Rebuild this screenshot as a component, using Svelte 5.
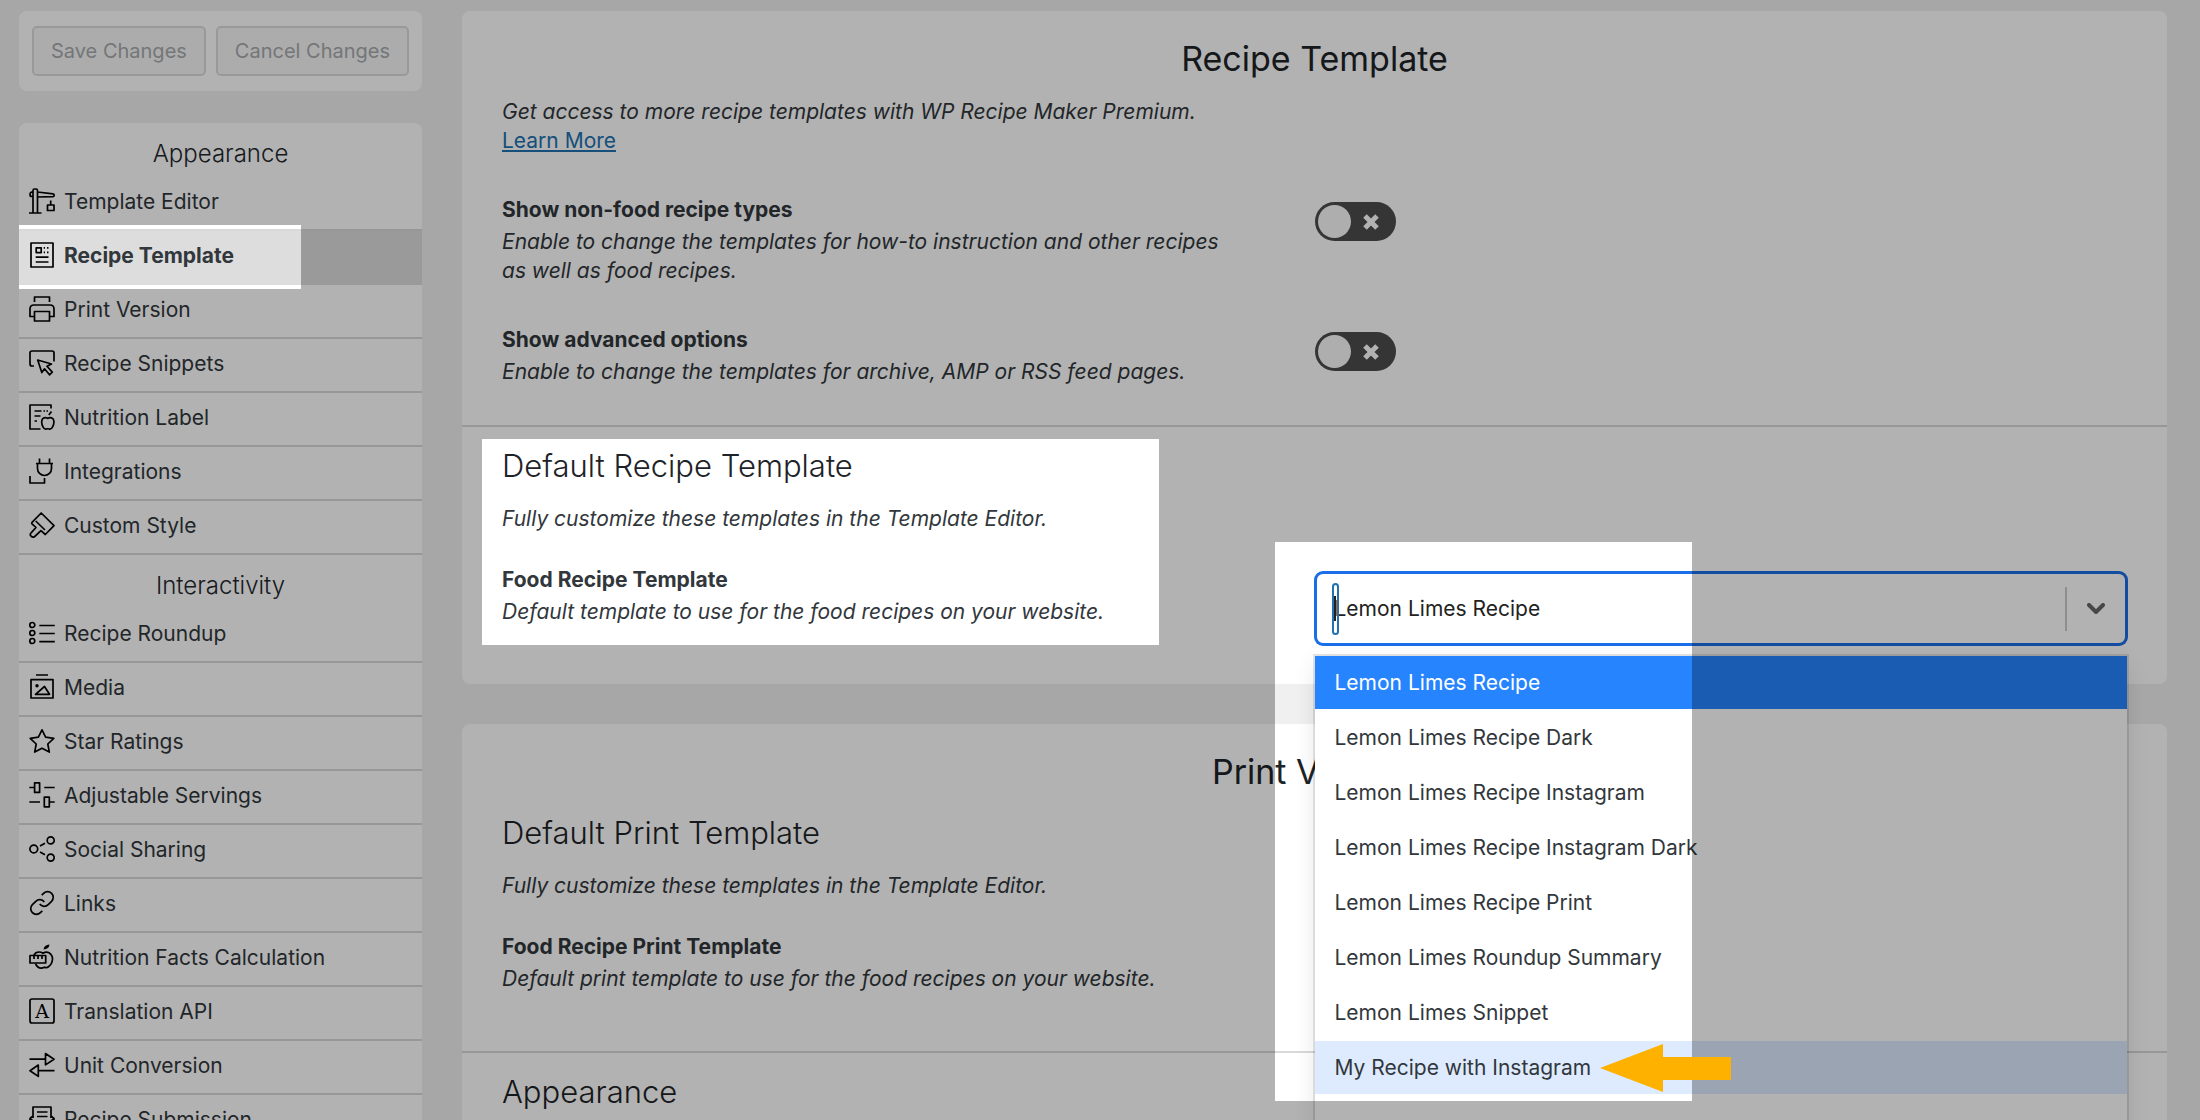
<script lang="ts">
	type Icon = { d: string; solid?: string; letter?: string };
	type Item = { label: string; icon: Icon; active?: boolean };

	// Outline icons on a 26px grid
	const appearance: Item[] = [
		{
			label: 'Template Editor',
			icon: {
				d: 'M4 25V2.5Q4 1 5.5 1H7q1.5 0 1.5 1.5V25M0 25h12.5M8.5 4 24 5.8q1.2.2 1.2 1.4T24 8.6L8.5 9M4 4.2H2.5Q1 4.4 1 6.4t1.5 2H4M21.7 12.5V17M18.5 17h6.5v5.5h-6.5z'
			}
		},
		{
			label: 'Recipe Template',
			active: true,
			icon: {
				d: 'M2 1h22v24H2zM7.2 5.8h5v4.8h-5zM14.7 5.8H16M18 5.8h1.5M14.7 10.4H16M18 10.4h1.5M6.7 15.2h12.8M6.7 20h12.8'
			}
		},
		{
			label: 'Print Version',
			icon: {
				d: 'M5.5 6V1h15v5M5 20.5H1V13q0-4 4-4h16q4 0 4 4v7.5h-4M5.5 15.5h15V25h-15z'
			}
		},
		{
			label: 'Recipe Snippets',
			icon: {
				d: 'M5 16H3q-2 0-2-2V3q0-2 2-2h20q2 0 2 2v8.5M8.7 10l13.8 4-4.5 2.3 5.3 5.8-2.8 2.7-5-6-2.7 3.7z'
			}
		},
		{
			label: 'Nutrition Label',
			icon: {
				d: 'M22 4.5V1H1v24h10.5M5.5 7h7M14.5 7H16M17.5 7H19M5.5 12h6M5.5 17H8M18.8 14.4q-2.6-1.8-5 .2-2.4 3.4.2 8.2 1.6 3 3.4 2.2 1.4-.5 2.8 0 1.8.8 3.4-2.2 2.6-4.8.2-8.2-2.4-2-5-.2zM19.8 11l2.7-3.5'
			}
		},
		{
			label: 'Integrations',
			icon: {
				d: 'M10.5.5v5M20.5.5v5M7 5.5h17M8.5 5.5v5a7 7 0 0 0 14 0v-5M1 18v7h14.5v-5'
			}
		},
		{
			label: 'Custom Style',
			icon: {
				d: 'M12.2 1 25 13.7l-8.7 8.8-4.3-3.8-6.3 5.8q-1.8 1.4-3.6-.3t.2-3.6L7 15.5 3 11.8q-.6-.6 0-1.4zM6.7 9l9.3 9'
			}
		}
	];

	const interactivity: Item[] = [
		{
			label: 'Recipe Roundup',
			icon: {
				d: 'M.8 5a2.5 2.5 0 1 0 5 0 2.5 2.5 0 1 0-5 0M.8 13a2.5 2.5 0 1 0 5 0 2.5 2.5 0 1 0-5 0M.8 21a2.5 2.5 0 1 0 5 0 2.5 2.5 0 1 0-5 0M10.3 5.5h15.5M10.3 13.5h15.5M10.3 21.7h15.5'
			}
		},
		{
			label: 'Media',
			icon: {
				d: 'M7 1h12M2 5.6h22V24H2zM6.5 20.300 15.500 12.500l5 7.800z',
				solid: 'M6.3 11.8a1.7 1.7 0 1 0 3.4 0 1.7 1.7 0 1 0-3.4 0'
			}
		},
		{
			label: 'Star Ratings',
			icon: { d: 'M13 1.8l3.6 7.4 8.2 1.1-6 5.7 1.5 8.1-7.3-3.9-7.3 3.9L7.2 16l-6-5.7 8.2-1.1z' }
		},
		{
			label: 'Adjustable Servings',
			icon: {
				d: 'M.3 5.5h5M5.6.8h5v9.6h-5zM15.3 5.5h10.4M.3 20H11M15.3 15.2h5v9.6h-5zM20.4 20h5.3'
			}
		},
		{
			label: 'Social Sharing',
			icon: {
				d: 'M.9 13a3.9 3.9 0 1 0 7.8 0 3.9 3.9 0 1 0-7.8 0M18.2 4.4a3.5 3.5 0 1 0 7 0 3.5 3.5 0 1 0-7 0M18.2 21.6a3.5 3.5 0 1 0 7 0 3.5 3.5 0 1 0-7 0M11 10l5-2.7M11 16l5 2.7'
			}
		},
		{
			label: 'Links',
			icon: {
				d: 'M10.7 14.1a5.6 5.6 0 0 0 8.5.6l3.4-3.4a5.6 5.6 0 0 0-8-8l-1.9 1.900M15.300 11.900a5.6 5.6 0 0 0-8.5-.6l-3.4 3.400a5.6 5.6 0 0 0 8 8l1.900-1.900'
			}
		},
		{
			label: 'Nutrition Facts Calculation',
			icon: {
				d: 'M5 11q1.5-3 5-3 2.2 0 4 1.2 3-1.8 6-.4 3.700 2.400 3.500 6.500-.4 5-4 7.500-2 1.500-4 .4-1.600.9-3.500.9-3 .1-5.500-4.100M1 11.500h15.700v7.500H1zM5 11.500v3.500M9 11.500v3.500M13 11.500v3.500',
				solid: 'M14.5 5.5Q15 1 20.5.5 20 5 14.5 5.5z'
			}
		},
		{
			label: 'Translation API',
			icon: { d: 'M3 1h20q2 0 2 2v20q0 2-2 2H3q-2 0-2-2V3q0-2 2-2z', letter: 'A' }
		},
		{
			label: 'Unit Conversion',
			icon: { d: 'M.5 7.2h15.800M16.500 1.500 25 7.200l-8.500 5.700zM25.500 18.700H9.500M9.300 13 1 18.700l8.300 5.700z' }
		},
		{
			label: 'Recipe Submission',
			icon: { d: 'M4 12V1h18v11M8 6h10.5M8 10.5h10.5M4 10 1 12.5V25h24V12.5L22 10M1 13l12 7 12-7' }
		}
	];

	const menu = [
		{ title: 'Appearance', items: appearance },
		{ title: 'Interactivity', items: interactivity }
	];

	const templates = [
		'Lemon Limes Recipe',
		'Lemon Limes Recipe Dark',
		'Lemon Limes Recipe Instagram',
		'Lemon Limes Recipe Instagram Dark',
		'Lemon Limes Recipe Print',
		'Lemon Limes Roundup Summary',
		'Lemon Limes Snippet',
		'My Recipe with Instagram'
	];

	let selected = $state('Lemon Limes Recipe');
	let focused = $state('My Recipe with Instagram');
	let printTemplate = $state('Lemon Limes Recipe Print');
	let nonFood = $state(false);
	let advanced = $state(false);
	let search = $state('');
</script>

{#snippet chevron()}
	<svg class="chevron" viewBox="0 0 18 12" aria-hidden="true">
		<path d="M2 2l7 7 7-7" />
	</svg>
{/snippet}

<div class="page">
	<aside class="sidebar">
		<div class="card actions">
			<button type="button" disabled>Save Changes</button>
			<button type="button" disabled>Cancel Changes</button>
		</div>

		<nav class="card menu">
			{#each menu as section}
				<h3>{section.title}</h3>
				<ul>
					{#each section.items as item}
						<li>
							<a href="#settings" class="menu-item" class:active={item.active}>
								<svg viewBox="0 0 26 26" aria-hidden="true">
									<path d={item.icon.d} />
									{#if item.icon.solid}
										<path class="solid" d={item.icon.solid} />
									{/if}
									{#if item.icon.letter}
										<text x="13" y="20" text-anchor="middle">{item.icon.letter}</text>
									{/if}
								</svg>
								{item.label}
							</a>
						</li>
					{/each}
				</ul>
			{/each}
		</nav>
	</aside>

	<main class="content" id="settings">
		<section class="card settings">
			<h1>Recipe Template</h1>

			<div class="group plain">
				<div class="intro">
					<p>Get access to more recipe templates with WP Recipe Maker Premium.</p>
					<a href="#premium">Learn More</a>
				</div>
				<div class="setting">
					<div class="setting-text">
						<label for="non-food">Show non-food recipe types</label>
						<p>Enable to change the templates for how-to instruction and other recipes as well as food recipes.</p>
					</div>
					<div class="setting-control">
						<span class="toggle">
							<input id="non-food" type="checkbox" bind:checked={nonFood} />
							<svg viewBox="0 0 16 16" aria-hidden="true"><path d="M2 2l12 12M14 2L2 14" /></svg>
						</span>
					</div>
				</div>
				<div class="setting">
					<div class="setting-text">
						<label for="advanced">Show advanced options</label>
						<p>Enable to change the templates for archive, AMP or RSS feed pages.</p>
					</div>
					<div class="setting-control">
						<span class="toggle">
							<input id="advanced" type="checkbox" bind:checked={advanced} />
							<svg viewBox="0 0 16 16" aria-hidden="true"><path d="M2 2l12 12M14 2L2 14" /></svg>
						</span>
					</div>
				</div>
			</div>

			<div class="group">
				<div class="group-head">
					<h2>Default Recipe Template</h2>
					<p>Fully customize these templates in the Template Editor.</p>
				</div>
				<div class="setting">
					<div class="setting-text">
						<label for="food-template">Food Recipe Template</label>
						<p>Default template to use for the food recipes on your website.</p>
					</div>
					<div class="setting-control">
						<div class="select open">
							<select id="food-template" bind:value={selected}>
								{#each templates as template}
									<option>{template}</option>
								{/each}
							</select>
							<input class="search" type="text" aria-label="Search templates" bind:value={search} />
							<span class="separator"></span>
							{@render chevron()}
						</div>
						<ul class="options" role="listbox" aria-label="Templates">
							{#each templates as template}
								<li role="option" aria-selected={template === selected}>
									<button
										type="button"
										class:selected={template === selected}
										class:focused={template === focused}
										onclick={() => (selected = template)}
										onmouseenter={() => (focused = template)}
									>
										{template}
									</button>
								</li>
							{/each}
						</ul>
					</div>
				</div>
			</div>
		</section>

		<section class="card settings">
			<h1>Print Version</h1>

			<div class="group">
				<div class="group-head">
					<h2>Default Print Template</h2>
					<p>Fully customize these templates in the Template Editor.</p>
				</div>
				<div class="setting">
					<div class="setting-text">
						<label for="print-template">Food Recipe Print Template</label>
						<p>Default print template to use for the food recipes on your website.</p>
					</div>
					<div class="setting-control">
						<div class="select">
							<select id="print-template" bind:value={printTemplate}>
								{#each templates as template}
									<option>{template}</option>
								{/each}
							</select>
							<span class="separator"></span>
							{@render chevron()}
						</div>
					</div>
				</div>
			</div>

			<div class="group">
				<div class="group-head">
					<h2>Appearance</h2>
				</div>
			</div>
		</section>
	</main>

	<!-- Walkthrough layer: dims the page except for the highlighted areas -->
	<svg class="walkthrough" aria-hidden="true">
		<path
			class="dim"
			d="M0 0H9999V9999H0zM19 225H301V289H19zM482 439H1159V645H482zM1275 542H1692V1101H1275z"
		/>
		<path class="arrow" d="M1600 1068L1663 1044V1057H1731V1080H1663V1092z" />
	</svg>
</div>

<style>
	:global(body) {
		background: #f0f0f1;
	}

	.page {
		position: relative;
		display: flex;
		align-items: flex-start;
		gap: 40px;
		height: 100vh;
		padding: 11px 33px 0 19px;
		box-sizing: border-box;
		overflow: hidden;
		background: #f0f0f1;
		color: #32373c;
		font-family: Inter, 'Open Sans', sans-serif;
		font-size: 21px;
		line-height: 29px;
	}

	h1,
	h2,
	h3,
	p,
	ul {
		margin: 0;
		padding: 0;
	}

	ul {
		list-style: none;
	}

	.card {
		background: #fff;
		border-radius: 8px;
	}

	/* Sidebar */
	.sidebar {
		flex: 0 0 403px;
		display: flex;
		flex-direction: column;
		gap: 32px;
	}

	.actions {
		display: flex;
		gap: 10px;
		padding: 15px 13px;
	}

	.actions button {
		flex: 1 1 auto;
		height: 50px;
		padding: 0;
		border: 2px solid #dcdcde;
		border-radius: 5px;
		background: #f6f7f7;
		color: #a7aaad;
		font: inherit;
		font-size: 20px;
	}

	.menu h3 {
		color: #23282d;
		font-size: 24px;
		font-weight: 300;
		line-height: 54px;
		height: 54px;
		padding-top: 4px;
		box-sizing: border-box;
		text-align: center;
	}

	.menu-item {
		display: flex;
		align-items: center;
		gap: 9px;
		height: 54px;
		box-sizing: border-box;
		padding: 0 10px 4px;
		border-bottom: 2px solid #d9d9d9;
		color: #32373c;
		text-decoration: none;
	}

	.menu-item.active {
		background: #ddd;
		border-color: #ddd;
		font-weight: 700;
	}

	.menu-item svg {
		flex: none;
		width: 26px;
		height: 26px;
		overflow: visible;
		fill: none;
		stroke: #000;
		stroke-width: 1.7;
		stroke-linejoin: round;
	}

	.menu-item .solid {
		fill: #000;
		stroke: none;
	}

	.menu-item text {
		fill: #000;
		stroke: none;
		font-family: 'DejaVu Serif', serif;
		font-size: 19px;
		font-weight: 400;
	}

	/* Settings */
	.content {
		flex: 1;
		min-width: 0;
		display: flex;
		flex-direction: column;
		gap: 40px;
	}

	h1 {
		padding-top: 26px;
		color: #1d2327;
		font-size: 34px;
		font-weight: 400;
		line-height: 44px;
		text-align: center;
	}

	h2 {
		color: #1d2327;
		font-size: 31px;
		font-weight: 300;
		line-height: 40px;
	}

	.group {
		padding: 19px 40px 39px;
	}

	.group.plain {
		padding-top: 16px;
	}

	.group + .group {
		border-top: 2px solid #d9d9d9;
	}

	.intro a {
		color: #2271b1;
	}

	.group p {
		font-style: italic;
	}

	.group-head p {
		margin-top: 18px;
	}

	.setting {
		display: grid;
		grid-template-columns: 1fr 1fr;
		margin-top: 40px;
	}

	.group-head + .setting {
		margin-top: 32px;
	}

	.setting-text {
		padding-right: 80px;
	}

	.setting-text label {
		display: block;
		margin-bottom: 3px;
		font-weight: 700;
	}

	.setting-control {
		position: relative;
		padding-top: 7px;
	}

	.toggle {
		position: relative;
		display: block;
		width: 81px;
		height: 39px;
	}

	.toggle input {
		display: block;
		width: 100%;
		height: 100%;
		margin: 0;
		padding: 3px;
		box-sizing: border-box;
		appearance: none;
		border-radius: 20px;
		background: #4d4d4d;
	}

	.toggle input::before {
		content: '';
		display: block;
		width: 33px;
		height: 33px;
		border-radius: 50%;
		background: #fafafa;
	}

	.toggle input:checked::before {
		margin-left: auto;
	}

	.toggle svg {
		position: absolute;
		top: 12px;
		right: 17px;
		width: 16px;
		height: 16px;
		fill: none;
		stroke: #fff;
		stroke-width: 5;
	}

	.toggle input:checked + svg {
		display: none;
	}

	.select {
		position: relative;
		display: flex;
		align-items: center;
		height: 73px;
		box-sizing: border-box;
		border: 2px solid #ccc;
		border-radius: 8px;
		background: #fff;
	}

	.select.open {
		border-color: #1a6fe8;
		box-shadow: 0 0 0 1px #1a6fe8;
	}

	.select select {
		flex: 1;
		align-self: stretch;
		padding: 0 18px;
		border: none;
		outline: none;
		appearance: none;
		background: transparent;
		color: #222;
		font: inherit;
	}

	.search {
		position: absolute;
		left: 15px;
		width: 7px;
		height: 52px;
		box-sizing: border-box;
		padding: 0;
		border: 2px solid #2271b1;
		border-radius: 4px;
		background: linear-gradient(#222, #222) left / 2px 25px no-repeat;
	}

	.separator {
		width: 2px;
		height: 44px;
		background: #ccc;
	}

	.chevron {
		width: 18px;
		height: 12px;
		margin: 0 20px;
		fill: none;
		stroke: #666;
		stroke-width: 4;
		stroke-linecap: round;
		stroke-linejoin: round;
	}

	.options {
		position: absolute;
		z-index: 1;
		top: 91px;
		left: 0;
		right: 0;
		display: flex;
		flex-direction: column;
		gap: 2px;
		min-height: 600px;
		background: #fff;
		box-shadow:
			0 0 0 2px rgba(0, 0, 0, 0.1),
			0 8px 22px rgba(0, 0, 0, 0.1);
	}

	.options button {
		display: block;
		width: 100%;
		height: 53px;
		padding: 0 20px;
		border: none;
		background: transparent;
		color: #32373c;
		font: inherit;
		text-align: left;
	}

	.options .focused {
		background: #deebff;
	}

	.options .selected {
		background: #2684ff;
		color: #fff;
	}

	.walkthrough {
		position: absolute;
		z-index: 2;
		top: 0;
		left: 0;
		width: 100%;
		height: 100%;
		pointer-events: none;
	}

	.dim {
		fill: rgba(0, 0, 0, 0.3);
		fill-rule: evenodd;
	}

	.arrow {
		fill: #ffb100;
	}
</style>
